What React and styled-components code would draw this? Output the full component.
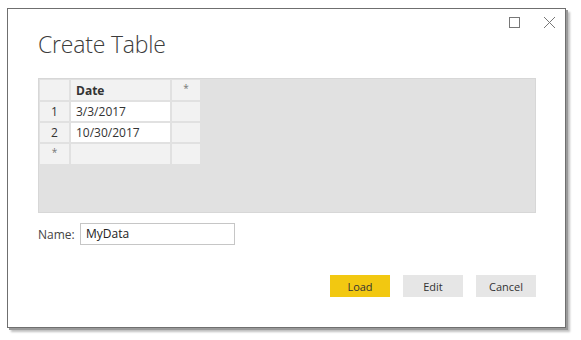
import React from "react";
import styled, { createGlobalStyle } from "styled-components";

const Global = createGlobalStyle`
  html, body { margin: 0; padding: 0; background: #ffffff; }
  body { font-family: "Open Sans", "Noto Sans", sans-serif; }
  * { box-sizing: border-box; }
`;

const Page = styled.div`
  width: 581px;
  height: 340px;
  padding: 8px 0 0 7px;
`;

const Dialog = styled.div`
  width: 559px;
  height: 320px;
  border: 1px solid #6f6f6f;
  background: #ffffff;
  box-shadow: 2px 2px 0 #9a9a9a, 4px 4px 2px rgba(0, 0, 0, 0.25);
  padding: 0 29px 0 30px;
  display: flex;
  flex-direction: column;
`;

const Controls = styled.div`
  display: flex;
  justify-content: flex-end;
  align-items: center;
  gap: 23px;
  height: 22px;
  margin-top: 2px;
  margin-right: -20px;
`;

const CtrlIcon = styled.svg`
  width: ${(p) => p.$size}px;
  height: ${(p) => p.$size}px;
  display: block;
`;

const Title = styled.h1`
  margin: 0;
  margin-top: -4px;
  font-family: "Open Sans", sans-serif;
  font-weight: 300;
  font-size: 23px;
  line-height: 30px;
  color: #3c3c3c;
  letter-spacing: -0.2px;
`;

const Panel = styled.div`
  margin-top: 19px;
  height: 135px;
  background: #e1e1e1;
  border: 1px solid #d7d7d7;
  display: flex;
  align-items: flex-start;
`;

const Grid = styled.table`
  border-collapse: separate;
  border-spacing: 2px;
  margin: -1px 0 0 -1px;
  font-size: 12px;
  color: #333;
`;

const Cell = styled.td`
  height: 19px;
  padding: 0 5px;
  background: ${(p) => (p.$white ? "#ffffff" : "#f2f2f2")};
  text-align: ${(p) => (p.$center ? "center" : "left")};
  font-weight: ${(p) => (p.$bold ? 700 : 400)};
  width: ${(p) => p.$w}px;
  line-height: 19px;
  white-space: nowrap;
`;

const Star = styled.span`
  font-size: 10px;
  color: #777;
  position: relative;
  top: -2px;
`;

const NameRow = styled.div`
  margin-top: 10px;
  display: flex;
  align-items: center;
  gap: 7px;
`;

const Label = styled.label`
  width: 35px;
  font-size: 12px;
  color: #444;
  white-space: nowrap;
`;

const Input = styled.div`
  width: 155px;
  height: 22px;
  border: 1px solid #c6c6c6;
  padding: 0 5px;
  font-size: 12px;
  line-height: 20px;
  color: #222;
`;

const Buttons = styled.div`
  margin-top: 30px;
  display: flex;
  justify-content: flex-end;
  gap: 13px;
`;

const Button = styled.button`
  width: 60px;
  height: 22px;
  border: none;
  padding: 0;
  font-family: "Open Sans", sans-serif;
  font-size: 11px;
  color: #333;
  background: ${(p) => (p.$primary ? "#f2c811" : "#e6e6e6")};
`;

export default function App() {
  return (
    <Page>
      <Global />
      <Dialog>
        <Controls>
          <CtrlIcon $size={11} viewBox="0 0 11 11">
            <rect x="0.5" y="0.5" width="10" height="10" fill="none" stroke="#777" strokeWidth="1" />
          </CtrlIcon>
          <CtrlIcon $size={13} viewBox="0 0 13 13">
            <path d="M1 1 L12 12 M12 1 L1 12" stroke="#777" strokeWidth="1" fill="none" />
          </CtrlIcon>
        </Controls>
        <Title>Create Table</Title>
        <Panel>
          <Grid>
            <tbody>
              <tr>
                <Cell $w={29} />
                <Cell $w={99} $bold>Date</Cell>
                <Cell $w={28} $center><Star>*</Star></Cell>
              </tr>
              <tr>
                <Cell $center>1</Cell>
                <Cell $white>3/3/2017</Cell>
                <Cell />
              </tr>
              <tr>
                <Cell $center>2</Cell>
                <Cell $white>10/30/2017</Cell>
                <Cell />
              </tr>
              <tr>
                <Cell $center><Star>*</Star></Cell>
                <Cell />
                <Cell />
              </tr>
            </tbody>
          </Grid>
        </Panel>
        <NameRow>
          <Label>Name:</Label>
          <Input>MyData</Input>
        </NameRow>
        <Buttons>
          <Button $primary>Load</Button>
          <Button>Edit</Button>
          <Button>Cancel</Button>
        </Buttons>
      </Dialog>
    </Page>
  );
}
